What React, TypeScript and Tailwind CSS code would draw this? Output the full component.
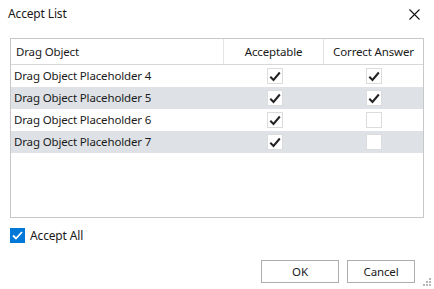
import React from "react";

const Check = ({ on }: { on: boolean }) => (
  <div className="w-[16px] h-[16px] border border-[#dcdcdc] bg-white flex items-center justify-center">
    {on && (
      <svg width="12" height="11" viewBox="0 0 12 11">
        <path d="M1.3 5.8 L4.5 9 L10.8 1.5" fill="none" stroke="#222" strokeWidth="2" />
      </svg>
    )}
  </div>
);

const rows = [
  { name: "Drag Object Placeholder 4", a: true, c: true },
  { name: "Drag Object Placeholder 5", a: true, c: true },
  { name: "Drag Object Placeholder 6", a: true, c: false },
  { name: "Drag Object Placeholder 7", a: true, c: false },
];

export default function App() {
  return (
    <div
      className="w-[434px] h-[289px] bg-white text-[11.5px] tracking-[-0.15px] text-[#1a1a1a] flex flex-col relative overflow-hidden"
      style={{ fontFamily: "'Noto Sans', 'Open Sans', sans-serif" }}
    >
      <div className="h-[26px] flex items-center justify-between pl-[8px] pr-[14px] pt-[2px]">
        <span className="text-[12px]">Accept List</span>
        <svg width="11" height="11" viewBox="0 0 11 11">
          <path d="M0.5 0.5 L10.5 10.5 M10.5 0.5 L0.5 10.5" stroke="#111" strokeWidth="1.1" />
        </svg>
      </div>
      <div className="mt-[12px] ml-[10px] w-[414px] h-[180px] border border-[#c8c8c8] flex flex-col">
        <div className="h-[26px] flex border-b border-[#d8d8d8] shrink-0">
          <div className="w-[213px] flex items-center pl-[5px] border-r border-[#e4e4e4]">Drag Object</div>
          <div className="w-[100px] flex items-center justify-center border-r border-[#e4e4e4]">Acceptable</div>
          <div className="flex-1 flex items-center justify-center">Correct Answer</div>
        </div>
        {rows.map((r, i) => (
          <div key={i} className={`h-[22px] flex items-center shrink-0 ${i % 2 === 1 ? "bg-[#dee2e6]" : "bg-white"}`}>
            <div className="w-[213px] pl-[3px]">{r.name}</div>
            <div className="w-[100px] flex justify-center pl-[1px]">
              <Check on={r.a} />
            </div>
            <div className="flex-1 flex justify-center pl-[1px]">
              <Check on={r.c} />
            </div>
          </div>
        ))}
      </div>
      <div className="mt-[10px] ml-[10px] flex items-center gap-[5px] h-[15px]">
        <div className="w-[15px] h-[15px] bg-[#0078d7] flex items-center justify-center">
          <svg width="11" height="9" viewBox="0 0 11 9">
            <path d="M1 4.5 L4 7.5 L10 1" fill="none" stroke="#fff" strokeWidth="1.8" />
          </svg>
        </div>
        <span className="text-[12px]">Accept All</span>
      </div>
      <div className="mt-[17px] flex justify-end gap-[8px] pr-[19px]">
        <div className="w-[78px] h-[23px] border border-[#adadad] bg-white flex items-center justify-center">OK</div>
        <div className="w-[68px] h-[23px] border border-[#adadad] bg-white flex items-center justify-center">Cancel</div>
      </div>
      <div className="absolute right-[2px] bottom-[2px]">
        <svg width="10" height="10" viewBox="0 0 10 10" fill="#b8b8b8">
          <rect x="7" y="1" width="2" height="2" />
          <rect x="4" y="4" width="2" height="2" />
          <rect x="7" y="4" width="2" height="2" />
          <rect x="1" y="7" width="2" height="2" />
          <rect x="4" y="7" width="2" height="2" />
          <rect x="7" y="7" width="2" height="2" />
        </svg>
      </div>
    </div>
  );
}
